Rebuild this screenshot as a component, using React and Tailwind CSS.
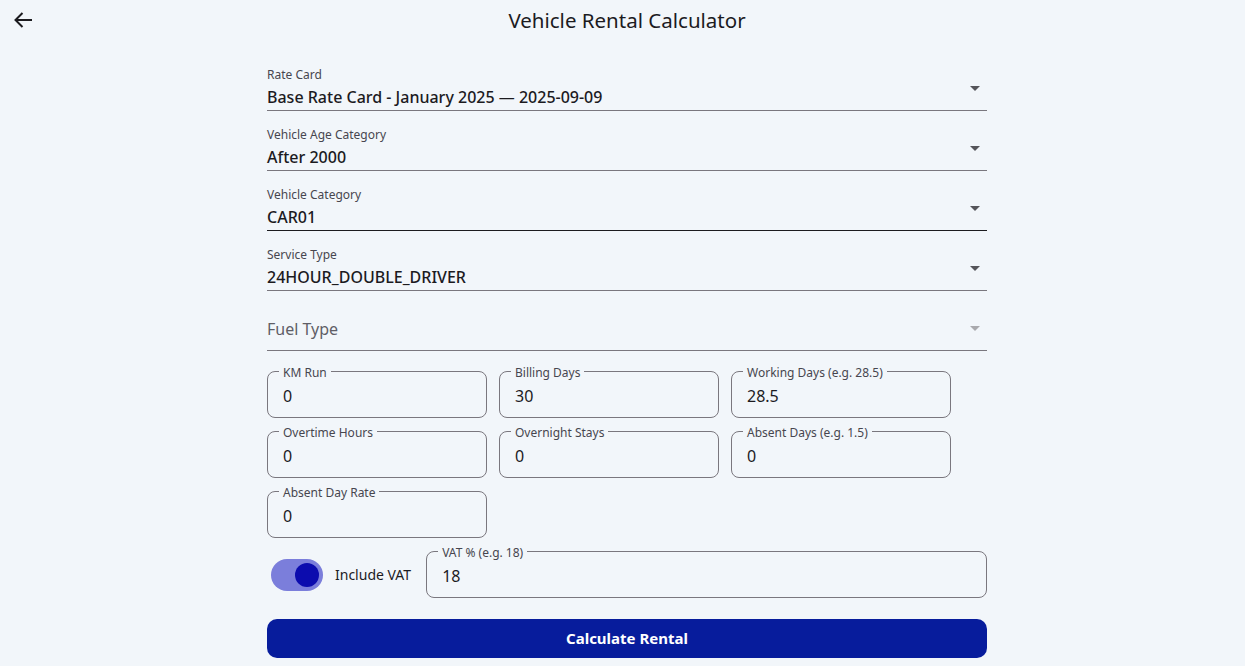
import React from "react";

const font = { fontFamily: '"Noto Sans", "Open Sans", Arial, sans-serif' };

function Caret({ light }) {
  return (
    <svg width="10" height="5" viewBox="0 0 10 5" className="mt-[35px] mr-[7px] shrink-0">
      <path d="M0 0 L10 0 L5 5 Z" fill={light ? "#a9a9ad" : "#55555a"} />
    </svg>
  );
}

function SelectField({ label, value, dark }) {
  return (
    <div
      className={`flex h-[60px] border-b ${dark ? "border-[#1c1b1f]" : "border-[#7a777e]"}`}
    >
      <div className="flex-1 flex flex-col pt-[16px]">
        <div className="text-[12px] leading-[16px] text-[#47464f]">{label}</div>
        <div className="mt-[4px] text-[16px] leading-[20px] font-medium text-[#1c1b1f]">{value}</div>
      </div>
      <Caret />
    </div>
  );
}

function OutlinedField({ label, value, className = "" }) {
  return (
    <div className={`relative h-[47px] rounded-lg border border-[#7a777e] ${className}`}>
      <div className="absolute -top-[7px] left-[11px] px-1 bg-[#f2f6fa] text-[12px] leading-[16px] text-[#47464f]">
        {label}
      </div>
      <div className="h-full flex items-center pl-[15px] pt-[3px] text-[16px] text-[#1c1b1f]">{value}</div>
    </div>
  );
}

export default function App() {
  return (
    <div className="min-h-[666px] bg-[#f2f6fa]" style={font}>
      <div className="relative h-10 flex items-center justify-center pl-[9px]">
        <svg
          className="absolute left-[13px] top-[11px]"
          width="20"
          height="18"
          viewBox="0 0 20 18"
          fill="none"
          stroke="#1c1b1f"
          strokeWidth="2"
        >
          <path d="M19 9 H3" />
          <path d="M9.5 2 L2.5 9 L9.5 16" />
        </svg>
        <div className="text-[20.5px] text-[#1c1b1f]">Vehicle Rental Calculator</div>
      </div>
      <div className="flex justify-center pl-[9px] pt-[11px]">
        <div className="w-[720px] flex flex-col">
          <SelectField label="Rate Card" value="Base Rate Card - January 2025 — 2025-09-09" />
          <SelectField label="Vehicle Age Category" value="After 2000" />
          <SelectField label="Vehicle Category" value="CAR01" dark />
          <SelectField label="Service Type" value="24HOUR_DOUBLE_DRIVER" />
          <div className="flex h-[60px] border-b border-[#7a777e]">
            <div className="flex-1 pt-[27px] text-[16px] leading-[22px] text-[#5f5e66]">Fuel Type</div>
            <Caret light />
          </div>

          <div className="mt-[20px] grid grid-cols-[220px_220px_220px] gap-x-3 gap-y-[13px]">
            <OutlinedField label="KM Run" value="0" />
            <OutlinedField label="Billing Days" value="30" />
            <OutlinedField label="Working Days (e.g. 28.5)" value="28.5" />
            <OutlinedField label="Overtime Hours" value="0" />
            <OutlinedField label="Overnight Stays" value="0" />
            <OutlinedField label="Absent Days (e.g. 1.5)" value="0" />
            <OutlinedField label="Absent Day Rate" value="0" />
          </div>

          <div className="mt-[13px] flex items-center">
            <div className="ml-1 w-[52px] h-8 rounded-full bg-[#7b7edb] flex items-center justify-end pr-1">
              <div className="w-6 h-6 rounded-full bg-[#0c0cae]" />
            </div>
            <div className="ml-3 text-[14px] text-[#1c1b1f]">Include VAT</div>
            <OutlinedField label="VAT % (e.g. 18)" value="18" className="flex-1 ml-[15px]" />
          </div>

          <button className="mt-[21px] h-[39px] rounded-[10px] bg-[#071c9c] text-white text-[15px] font-bold">
            Calculate Rental
          </button>
        </div>
      </div>
    </div>
  );
}
